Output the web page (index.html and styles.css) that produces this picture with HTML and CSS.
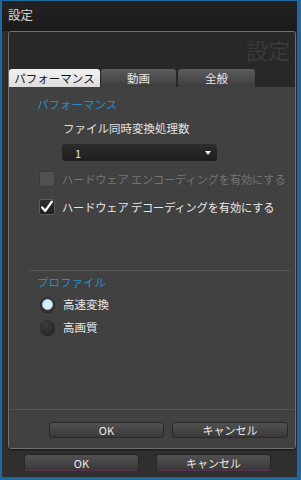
FILE: index.html
```html
<!doctype html>
<html lang="ja">
 <head>
  <meta charset="UTF-8">
  <title>設定</title>
  <link rel="stylesheet" href="styles.css">
 </head>
 <body>
  <div class="window">
   <div class="titlebar">設定</div>
   <div class="dialog">
    <div class="dialog-head">
     <div class="watermark">設定</div>
     <div class="tabs">
      <div class="tab active">パフォーマンス</div>
      <div class="tab">動画</div>
      <div class="tab">全般</div>
     </div>
    </div>
    <div class="tab-body">
     <div class="section-title">パフォーマンス</div>
     <div class="field-label">ファイル同時変換処理数</div>
     <div class="select"><span>1</span><span class="arrow"></span></div>
     <div class="check disabled"><span class="box"></span>ハードウェア エンコーディングを有効にする</div>
     <div class="check"><span class="box checked">
       <svg width="16" height="16" viewBox="0 0 16 16"><path d="M2.5 8.5 L6 12.5 L13.5 2" fill="none" stroke="#fff" stroke-width="2.6" stroke-linecap="round" stroke-linejoin="round"/></svg>
      </span>ハードウェア デコーディングを有効にする</div>
     <div class="separator"></div>
     <div class="section-title">プロファイル</div>
     <div class="radio"><span class="dot on"></span>高速変換</div>
     <div class="radio"><span class="dot"></span>高画質</div>
     <div class="spacer"></div>
     <div class="inner-buttons">
      <button class="btn inner-ok">OK</button>
      <button class="btn inner-cancel">キャンセル</button>
     </div>
    </div>
   </div>
   <div class="footer">
    <button class="btn outer-ok">OK</button>
    <button class="btn outer-cancel">キャンセル</button>
   </div>
  </div>
 </body>
</html>
```

FILE: styles.css
```css
* {
  margin: 0;
  padding: 0;
  box-sizing: border-box;
  font-family: "Noto Sans CJK JP", "Noto Sans", sans-serif;
}

body {
  width: 301px;
  height: 480px;
  background: #1d6496;
  overflow: hidden;
}

.window {
  width: 301px;
  height: 480px;
  border-style: solid;
  border-color: #1f6a9c;
  border-width: 1px 4px 3px 2px;
  background: #2f2f2f;
  display: flex;
  flex-direction: column;
}

.titlebar {
  height: 30px;
  flex: none;
  background: linear-gradient(#232323, #1a1a1a);
  color: #d8d8d8;
  font-size: 12.5px;
  line-height: 28px;
  padding-left: 6px;
}

.dialog {
  margin: 0 1px 0 6px;
  height: 418px;
  flex: none;
  border: 1px solid #707070;
  border-radius: 3px;
  display: flex;
  flex-direction: column;
  overflow: hidden;
  box-shadow: 0 1px 2px rgba(0, 0, 0, 0.6);
}

.dialog-head {
  background: #282828;
  height: 55px;
  display: flex;
  flex-direction: column;
  justify-content: space-between;
}

.watermark {
  align-self: flex-end;
  margin-right: 5px;
  margin-top: 4px;
  font-size: 22px;
  line-height: 26px;
  color: #3a3a3a;
}

.tabs {
  display: flex;
  gap: 1px;
  height: 18px;
}

.tab {
  width: 75px;
  text-align: center;
  font-size: 11.5px;
  line-height: 18px;
  color: #e8e8e8;
  background: linear-gradient(#5c5c5c, #3d3d3d);
  border-radius: 3px 3px 0 0;
}

.tab:nth-child(3) {
  margin-left: 1px;
  width: 77px;
}

.tab.active {
  width: 91px;
  color: #111;
  background: linear-gradient(#f4f4f4, #dcdcdc);
}

.tab-body {
  flex: 1;
  background: #414141;
  display: flex;
  flex-direction: column;
  padding-top: 9px;
}

.section-title {
  margin-left: 28px;
  font-size: 11.5px;
  line-height: 16px;
  color: #2a8cc2;
}

.field-label {
  margin: 8px 0 0 54px;
  font-size: 11.5px;
  line-height: 16px;
  color: #e2e2e2;
}

.select {
  margin: 8px 0 0 53px;
  width: 155px;
  height: 17px;
  border-radius: 3px;
  background: linear-gradient(#2c2c2c, #1e1e1e);
  display: flex;
  align-items: center;
  justify-content: space-between;
  padding: 0 6px 0 13px;
  color: #e8e8e8;
  font-size: 11px;
}

.arrow {
  width: 0;
  height: 0;
  border-left: 3.5px solid transparent;
  border-right: 3.5px solid transparent;
  border-top: 4px solid #f0f0f0;
}

.check {
  display: flex;
  align-items: center;
  gap: 7px;
  margin-left: 30px;
  font-size: 11.2px;
  letter-spacing: -0.1px;
  color: #e8e8e8;
  height: 18px;
}

.check.disabled {
  margin-top: 9px;
  color: #747474;
}

.check + .check {
  margin-top: 10px;
}

.box {
  width: 16px;
  height: 16px;
  border-radius: 2px;
  background: #505050;
  border: 1px solid #3a3a3a;
  display: flex;
  align-items: center;
  justify-content: center;
}

.box.checked {
  background: linear-gradient(#2e2e2e, #1f1f1f);
  border-color: #5a5a5a;
}

.separator {
  margin: 54px 4px 0 20px;
  height: 1px;
  background: #565656;
}

.separator + .section-title {
  margin-top: 3px;
}

.radio {
  display: flex;
  align-items: center;
  gap: 8px;
  margin-left: 31px;
  height: 16px;
  font-size: 11.5px;
  color: #e8e8e8;
  margin-top: 6px;
}

.radio + .radio {
  margin-top: 7px;
}

.dot {
  width: 15px;
  height: 15px;
  border-radius: 50%;
  background: radial-gradient(circle at 40% 35%, #3c3c3c, #222);
  box-shadow: 0 1px 1px rgba(0, 0, 0, 0.5);
}

.dot.on {
  background: radial-gradient(circle, #e4f4ff 0, #cbe8fb 45%, #333 55%, #2a2a2a 100%);
}

.spacer {
  flex: 1;
  border-bottom: 1px solid #555;
  margin-bottom: 12px;
}

.inner-buttons {
  display: flex;
  gap: 8px;
  padding-left: 40px;
  margin-bottom: 10px;
}

.btn {
  height: 16px;
  border: 1px solid #2a2a2a;
  border-radius: 3px;
  background: linear-gradient(#515151, #393939);
  color: #eaeaea;
  font-size: 11px;
  line-height: 14px;
  font-family: "Noto Sans CJK JP", "Noto Sans", sans-serif;
}

.inner-ok {
  width: 115px;
}

.inner-cancel {
  width: 116px;
}

.footer {
  display: flex;
  gap: 17px;
  padding: 5px 0 0 22px;
}

.footer .btn {
  width: 115px;
  height: 17px;
  border-color: #262626;
  border-bottom: 1px solid #5a3050;
}
```
